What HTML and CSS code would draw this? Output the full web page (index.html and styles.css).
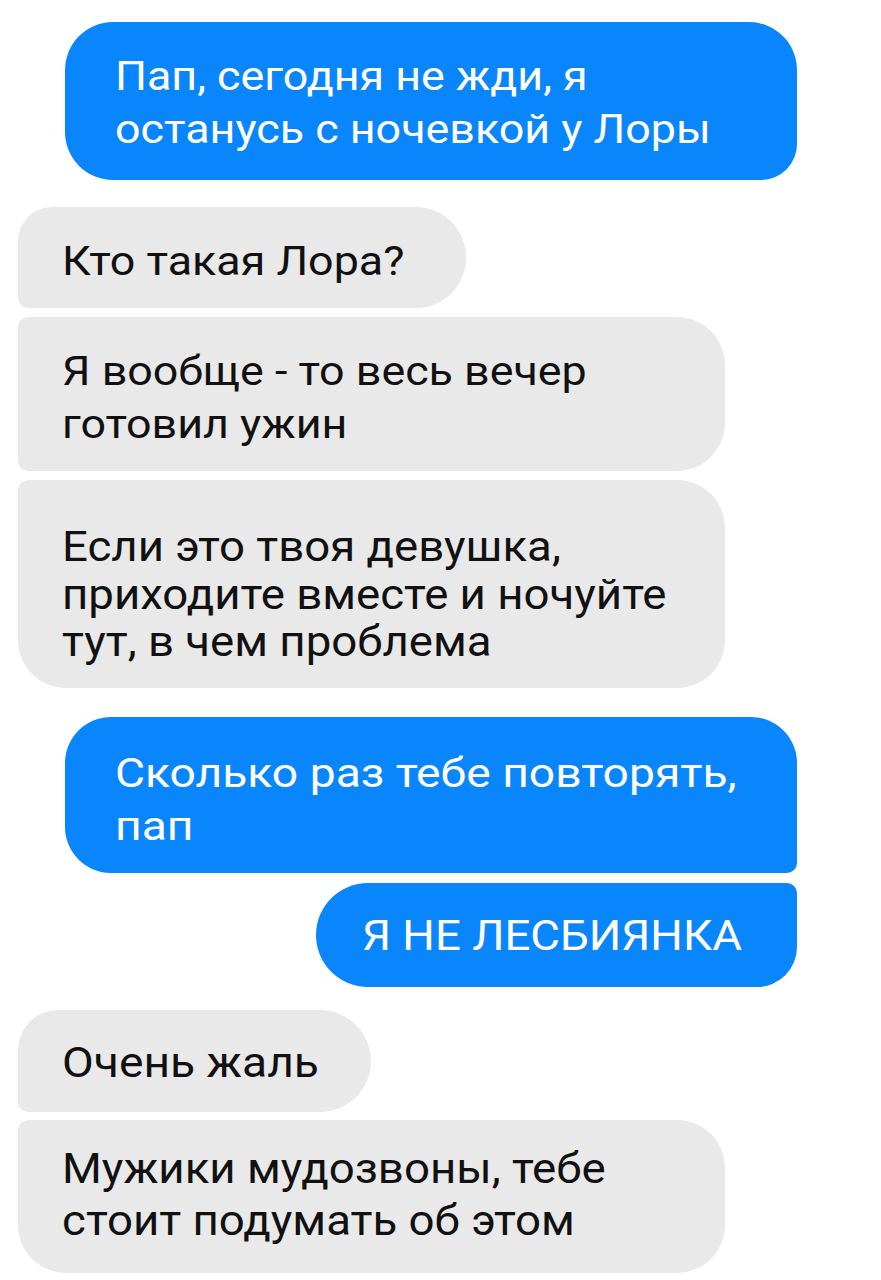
FILE: index.html
```html
<!DOCTYPE html>
<html lang="ru">
<head>
<meta charset="utf-8">
<title>Чат</title>
<link rel="stylesheet" href="styles.css">
</head>
<body>
<div class="chat">
  <div class="msg out b1"><span class="txt">Пап, сегодня не жди, я<br>останусь с ночевкой у Лоры</span></div>
  <div class="msg in b2"><span class="txt">Кто такая Лора?</span></div>
  <div class="msg in b3"><span class="txt">Я вообще - то весь вечер<br>готовил ужин</span></div>
  <div class="msg in b4"><span class="txt">Если это твоя девушка,<br>приходите вместе и ночуйте<br>тут, в чем проблема</span></div>
  <div class="msg out b5"><span class="txt">Сколько раз тебе повторять,<br>пап</span></div>
  <div class="msg out b6"><span class="txt">Я НЕ ЛЕСБИЯНКА</span></div>
  <div class="msg in b7"><span class="txt">Очень жаль</span></div>
  <div class="msg in b8"><span class="txt">Мужики мудозвоны, тебе<br>стоит подумать об этом</span></div>
</div>
</body>
</html>
```

FILE: styles.css
```css
html, body {
  margin: 0;
  padding: 0;
  background: #ffffff;
}

.chat {
  display: flex;
  flex-direction: column;
  padding-top: 22px;
  font-family: Roboto, "Noto Sans", sans-serif;
}

.msg {
  box-sizing: border-box;
  font-size: 40px;
  line-height: 53px;
  white-space: nowrap;
}

.txt {
  display: inline-block;
  transform-origin: left center;
}

.out {
  align-self: flex-end;
  margin-right: 84px;
  background: #0a86fd;
  color: #ffffff;
}

.in {
  align-self: flex-start;
  margin-left: 18px;
  background: #e9e9e9;
  color: #111111;
}

.b1 {
  width: 732px;
  height: 158px;
  padding: 28px 0 0 50px;
  border-radius: 48px 48px 36px 48px;
}
.b1 .txt { transform: scaleX(1.12); }

.b2 {
  margin-top: 27px;
  width: 448px;
  height: 101px;
  padding: 28px 0 0 44px;
  border-radius: 34px 50px 50px 10px;
}
.b2 .txt { transform: scaleX(1.12); }

.b3 {
  margin-top: 9px;
  width: 707px;
  height: 154px;
  padding: 28px 0 0 44px;
  border-radius: 10px 48px 48px 10px;
}
.b3 .txt { transform: scaleX(1.12); }

.b4 {
  margin-top: 9px;
  width: 707px;
  height: 208px;
  padding: 43px 0 0 44px;
  font-size: 42px;
  line-height: 47.5px;
  border-radius: 10px 48px 48px 48px;
}
.b4 .txt { transform: scaleX(1.085); }

.b5 {
  margin-top: 29px;
  width: 732px;
  height: 156px;
  padding: 30px 0 0 50px;
  font-size: 41px;
  border-radius: 46px 46px 10px 46px;
}
.b5 .txt { transform: scaleX(1.127); }

.b6 {
  margin-top: 10px;
  width: 481px;
  height: 104px;
  padding: 26px 0 0 46px;
  font-size: 42px;
  border-radius: 52px 10px 40px 52px;
}
.b6 .txt { transform: scaleX(1.086); }

.b7 {
  margin-top: 23px;
  width: 353px;
  height: 102px;
  padding: 26px 0 0 44px;
  font-size: 42px;
  border-radius: 40px 51px 51px 10px;
}
.b7 .txt { transform: scaleX(1.1); }

.b8 {
  margin-top: 8px;
  width: 707px;
  height: 153px;
  padding: 23px 0 0 44px;
  font-size: 42px;
  line-height: 52px;
  border-radius: 10px 48px 48px 48px;
}
.b8 .txt { transform: scaleX(1.086); }
```
